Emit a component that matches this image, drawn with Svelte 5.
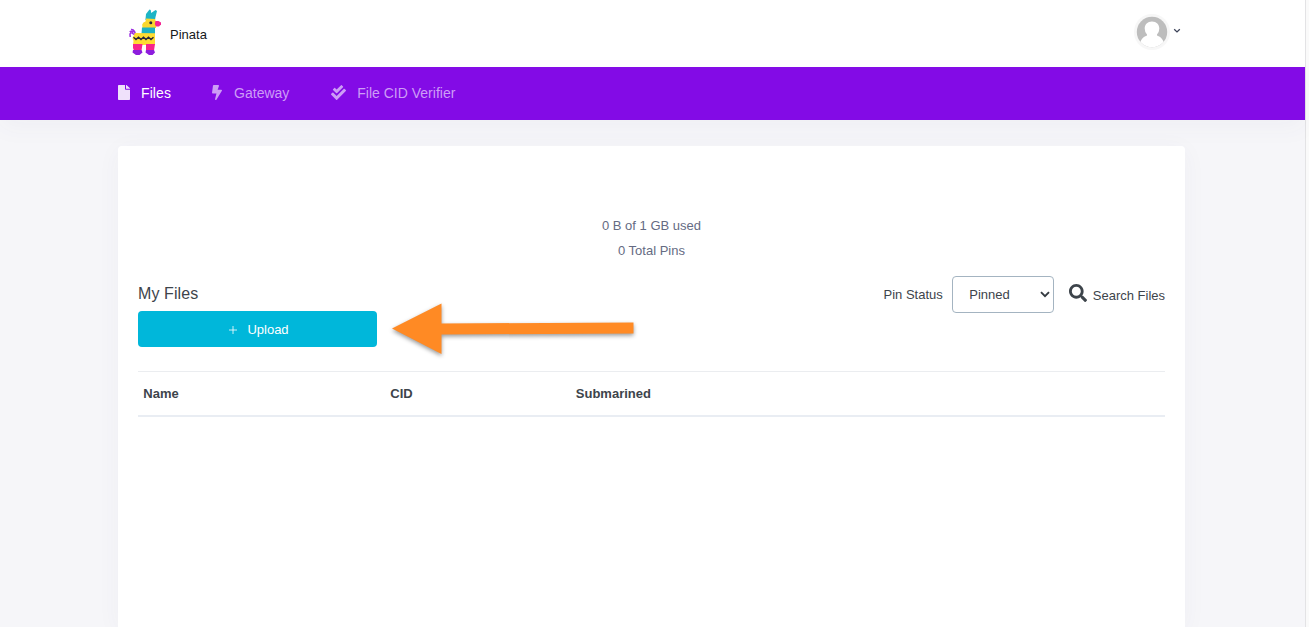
<script>
  const columns = ['Name', 'CID', 'Submarined'];
</script>

<div class="window">
  <div class="page">
    <header>
      <div class="brand">
        <svg class="logo" width="34" height="48" viewBox="0 0 34 48" aria-hidden="true">
          <path d="M6 29Q8 25 6.500 22.500Q5 20 3 20.500M6 25.500Q3 22.500 2 25L2.200 28M5.500 23.500Q3 21.500 1.800 23" fill="none" stroke="#9b2fe0" stroke-width="1.500" />
          <path d="M17.500 10L18 5L21.500 0.500L22.700 1L23.200 4L27.500 1L29 2L27.500 8L27 11H17.500Z" fill="#1db4c5" />
          <path d="M18 9.500L27 10L28 13V19H14.500L14.200 15.500Q15 13 17.500 12.500Z" fill="#f9d72f" />
          <path d="M27.500 12H30.500L33 13.500V15.500L31 17.500H28L26.800 15Z" fill="#f42491" />
          <path d="M14 18.500H27V25H13.500Z" fill="#1eb2c3" />
          <path d="M7 24L27 24.300V36H5L5.500 32L4.500 29Z" fill="#ffdc32" />
          <path d="M5.500 28.200L8 30.500L10.500 28.200L13 30.500L15.500 28.200L18 30.500L20.500 28.200L23 30.500L25.500 28.200" fill="none" stroke="#29283a" stroke-width="1.400" />
          <path d="M5 35H14.500L13.500 41.500H6L5 39ZM18 35H27L26 41.500H18Z" fill="#f7248c" />
          <path d="M5 41H13.500L14.500 43.500L11.500 46H8L4.500 43.500ZM18 41H26L27 43.500L24.500 46H21L17.500 43.500Z" fill="#8d1ddd" />
          <circle cx="22.800" cy="13.800" r="1.500" fill="#26243a" />
        </svg>
        <span>Pinata</span>
      </div>
      <div class="account">
        <svg width="36" height="36" viewBox="0 0 36 36" aria-hidden="true">
          <defs><clipPath id="face"><circle cx="18" cy="18" r="15.2" /></clipPath></defs>
          <circle cx="18" cy="18" r="18" fill="#f7f7f7" />
          <g clip-path="url(#face)">
            <path d="M0 0H36V36H0Z" fill="#bdbdbd" />
            <path d="M18 7.500C22.500 7.500 25.300 10.500 25.300 14.500Q25.300 18 23 20.500V21.500C28 23 31 28 31.500 36H4.500C5 28 8 23 13 21.500V20.500Q10.700 18 10.700 14.500C10.700 10.500 13.500 7.500 18 7.500Z" fill="#fff" />
          </g>
        </svg>
        <svg class="caret" width="8" height="6" viewBox="0 0 8 6"><path d="M1.2 1.2L4 3.9L6.8 1.2" fill="none" stroke="#3c4258" stroke-width="1.300" /></svg>
      </div>
    </header>
    <nav>
      <a class="active" href="#files">
        <svg width="12" height="15" viewBox="0 0 384 512" preserveAspectRatio="none"><path fill="currentColor" d="M224 136V0H24C10.7 0 0 10.7 0 24v464c0 13.300 10.700 24 24 24h336c13.300 0 24-10.700 24-24V160H248c-13.200 0-24-10.800-24-24zM384 121.900v6.100H256V0h6.100c6.400 0 12.500 2.500 17 7l97.900 98c4.500 4.500 7 10.600 7 16.900z" /></svg>
        <span>Files</span>
      </a>
      <a class="gateway" href="#gateway">
        <svg width="10" height="15" viewBox="0 0 320 512" preserveAspectRatio="none"><path fill="currentColor" d="M296 160H180.600l42.600-129.800C227.200 15 215.700 0 200 0H56C44 0 33.800 8.900 32.200 20.800l-32 240C-1.700 275.200 9.500 288 24 288h118.700L96.600 482.500c-3.600 15.200 8 29.500 23.300 29.500 8.400 0 16.400-4.400 20.800-12l176-304c9.300-15.900-2.200-36-20.700-36z" /></svg>
        <span>Gateway</span>
      </a>
      <a class="verifier" href="#verifier">
        <svg width="15" height="15" viewBox="0 0 512 512"><path fill="currentColor" d="M505 174.800l-39.600-39.600c-9.400-9.400-24.600-9.400-33.900 0L192 374.700 80.600 263.200c-9.400-9.400-24.600-9.400-33.900 0L7 302.900c-9.400 9.400-9.400 24.600 0 34L175 505c9.400 9.400 24.600 9.400 33.900 0l296-296.200c9.400-9.500 9.400-24.700.1-34zm-324.300 106c6.200 6.300 16.400 6.300 22.600 0l208-208.200c6.200-6.300 6.200-16.400 0-22.600L366.100 4.700c-6.200-6.300-16.400-6.300-22.600 0L192 156.200l-55.400-55.500c-6.200-6.300-16.400-6.300-22.600 0L68.700 146c-6.200 6.300-6.200 16.400 0 22.600l112 112.200z" /></svg>
        <span>File CID Verifier</span>
      </a>
    </nav>
    <main>
      <section class="card">
        <div class="usage"><div>0 B of 1 GB used</div><div>0 Total Pins</div></div>
        <div class="tools">
          <div class="left">
            <h2>My Files</h2>
            <div class="action">
              <button class="upload">
                <svg width="8" height="8" viewBox="0 0 8 8"><path d="M4 0V8M0 4H8" stroke="currentColor" stroke-width=".8" /></svg>
                <span>Upload</span>
              </button>
              <svg class="arrow" width="252" height="64" viewBox="0 0 252 64" aria-hidden="true"><path d="M5 31.500L54.500 6.500V26.500L246.500 25.500V36.500L54.500 37.500V57Z" fill="#ff8a24" /></svg>
            </div>
          </div>
          <div class="filters">
            <span class="label">Pin Status</span>
            <div class="select"><span>Pinned</span><svg width="10" height="7" viewBox="0 0 10 7"><path d="M1 1.200L5 5.200L9 1.200" fill="none" stroke="#343a40" stroke-width="1.900" /></svg></div>
            <svg class="search" width="18" height="18" viewBox="0 0 512 512"><path fill="currentColor" d="M505 442.700L405.300 343c-4.500-4.500-10.600-7-17-7H372c27.600-35.300 44-79.700 44-128C416 93.100 322.900 0 208 0S0 93.100 0 208s93.100 208 208 208c48.300 0 92.700-16.400 128-44v16.300c0 6.400 2.500 12.500 7 17l99.700 99.700c9.400 9.400 24.600 9.400 33.900 0l28.300-28.300c9.400-9.400 9.400-24.600.1-34zM208 336c-70.700 0-128-57.200-128-128 0-70.700 57.200-128 128-128 70.700 0 128 57.200 128 128 0 70.700-57.200 128-128 128z" /></svg>
            <span class="search-text">Search Files</span>
          </div>
        </div>
        <div class="table">{#each columns as column}<span>{column}</span>{/each}</div>
      </section>
    </main>
  </div>
</div>

<style>
  :global(body) { margin: 0; overflow: hidden; }
  * { box-sizing: border-box; }
  svg { display: block; flex: none; }
  .window { height: 627px; background: #fafafa; font: 13px/20px "Liberation Sans", Arial, sans-serif; color: #3d444b; }
  .page { width: 1306px; height: 627px; border-right: 1px solid #e3e3e5; background: #f6f6f9; display: flex; flex-direction: column; }
  header { height: 67px; flex: none; background: #fff; padding: 0 124px 0 128px; display: flex; justify-content: space-between; }
  .brand { display: flex; color: #16181b; }
  .logo { margin-top: 9px; }
  .brand span { margin: 25px 0 0 8px; }
  .account { display: flex; padding-top: 14px; }
  .caret { margin: 14px 0 0 3px; }
  nav { height: 53px; flex: none; background: #830be6; padding: 16px 118px 0; display: flex; font-size: 14px; position: relative; box-shadow: 0 8px 24px rgba(80, 70, 120, .04); }
  nav a { display: flex; color: #cd9df6; text-decoration: none; }
  nav svg { margin-top: 2px; }
  nav span { margin-left: 11px; }
  nav a.active { color: #fff; }
  .active svg { opacity: .88; }
  .active span { letter-spacing: .1px; }
  .gateway { margin-left: 41px; }
  .gateway span { margin-left: 12px; }
  .verifier { margin-left: 41.500px; }
  .verifier span { margin-left: 11.500px; }
  main { padding: 26px 120px 0 118px; flex: 1; display: flex; }
  .card { flex: 1; background: #fff; border-radius: 4px 4px 0 0; padding: 67px 20px 0; box-shadow: 0 4px 24px rgba(80, 80, 120, .045); }
  .usage { text-align: center; line-height: 25px; color: #656b83; }
  .tools { display: flex; justify-content: space-between; height: 108px; padding-top: 13px; }
  h2 { font-size: 16px; line-height: 24px; font-weight: 400; letter-spacing: .1px; margin: 8px 0 7px; height: 20px; display: flex; align-items: center; }
  .action { display: flex; height: 36px; }
  .upload { width: 239px; height: 36px; border: 0; border-radius: 4px; background: #00b7da; color: #fff; font: inherit; display: flex; align-items: center; justify-content: center; gap: 10px; padding: 1px 0 0 3px; }
  .arrow { margin: -14px 0 0 10px; filter: drop-shadow(0 2px 2px rgba(0, 0, 0, .4)); }
  .filters { display: flex; height: 37px; }
  .label { margin: 9px 9px 0 0; }
  .select { width: 102px; height: 37px; border: 1px solid #a4b4c1; border-radius: 4px; display: flex; align-items: center; justify-content: space-between; padding: 0 3px 0 16.500px; }
  .search { margin: 8px 5.500px 0 15.500px; }
  .search-text { margin-top: 10px; }
  .table { height: 46px; border-top: 1px solid #ebedf0; border-bottom: 2px solid #e9edf3; display: grid; grid-template-columns: 247px 185.500px 1fr; align-items: center; padding-left: 5.300px; font-weight: 700; }
</style>
